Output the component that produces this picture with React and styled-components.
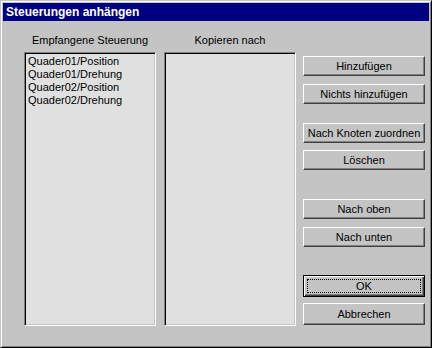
import React from 'react';
import styled, { createGlobalStyle } from 'styled-components';

const GlobalStyle = createGlobalStyle`
  html, body {
    margin: 0;
    padding: 0;
    background: #c4c4c4;
  }
  body {
    font-family: "Liberation Sans", Arial, sans-serif;
  }
`;

const Window = styled.div`
  box-sizing: border-box;
  width: 432px;
  height: 348px;
  background: #c4c4c4;
  border: 1px solid;
  border-color: #c4c4c4 #000 #000 #c4c4c4;
  box-shadow: inset 1px 1px 0 #fff, inset -1px -1px 0 #808080;
  padding: 2px;
  display: flex;
  flex-direction: column;
`;

const TitleBar = styled.div`
  height: 18px;
  background: #000080;
  color: #fff;
  font-weight: bold;
  font-size: 12px;
  line-height: 18px;
  padding-left: 3px;
  white-space: nowrap;
`;

const Body = styled.div`
  flex: 1;
  display: flex;
  padding-left: 21px;
`;

const Column = styled.div`
  width: 132px;
  margin-right: ${p => p.$gap || 0}px;
  padding-top: 12px;
  display: flex;
  flex-direction: column;
`;

const Label = styled.div`
  height: 14px;
  line-height: 14px;
  font-size: 11px;
  color: #000;
  text-align: center;
  margin-bottom: 5px;
  white-space: nowrap;
`;

const ListBox = styled.div`
  box-sizing: border-box;
  height: 274px;
  background: #e0e0e0;
  border: 1px solid;
  border-color: #808080 #fff #fff #808080;
  box-shadow: inset 1px 1px 0 #000, inset -1px -1px 0 #c4c4c4;
  padding: 2px 2px 0 3px;
`;

const ListItem = styled.div`
  font-size: 11px;
  line-height: 13px;
  color: #000;
  white-space: nowrap;
`;

const ButtonColumn = styled.div`
  width: 122px;
  padding-top: 35px;
  display: flex;
  flex-direction: column;
`;

const ButtonGroup = styled.div`
  display: flex;
  flex-direction: column;
  gap: ${p => p.$gap}px;
  margin-top: ${p => p.$top || 0}px;
`;

const Button = styled.div`
  box-sizing: border-box;
  height: ${p => p.$h || 20}px;
  background: #c4c4c4;
  border: 1px solid;
  border-color: #fff #404040 #404040 #fff;
  box-shadow: inset -1px -1px 0 #808080;
  font-size: 11px;
  color: #000;
  display: flex;
  align-items: center;
  justify-content: center;
  white-space: nowrap;
  position: relative;
`;

const DefaultButton = styled(Button)`
  border-color: #000;
  box-shadow: inset 1px 1px 0 #fff, inset -1px -1px 0 #404040, inset -2px -2px 0 #808080;
`;

const FocusRing = styled.span`
  position: absolute;
  inset: 3px;
  border: 1px dotted #000;
`;

const received = [
  'Quader01/Position',
  'Quader01/Drehung',
  'Quader02/Position',
  'Quader02/Drehung',
];

export default function App() {
  return (
    <>
      <GlobalStyle />
      <Window>
        <TitleBar>Steuerungen anhängen</TitleBar>
        <Body>
          <Column $gap={8}>
            <Label>Empfangene Steuerung</Label>
            <ListBox>
              {received.map(item => (
                <ListItem key={item}>{item}</ListItem>
              ))}
            </ListBox>
          </Column>
          <Column $gap={7}>
            <Label>Kopieren nach</Label>
            <ListBox />
          </Column>
          <ButtonColumn>
            <ButtonGroup $gap={8}>
              <Button>Hinzufügen</Button>
              <Button>Nichts hinzufügen</Button>
            </ButtonGroup>
            <ButtonGroup $gap={7} $top={19}>
              <Button>Nach Knoten zuordnen</Button>
              <Button>Löschen</Button>
            </ButtonGroup>
            <ButtonGroup $gap={8} $top={29}>
              <Button>Nach oben</Button>
              <Button>Nach unten</Button>
            </ButtonGroup>
            <ButtonGroup $gap={6} $top={28}>
              <DefaultButton $h={22}>
                <FocusRing />
                OK
              </DefaultButton>
              <Button $h={22}>Abbrechen</Button>
            </ButtonGroup>
          </ButtonColumn>
        </Body>
      </Window>
    </>
  );
}
